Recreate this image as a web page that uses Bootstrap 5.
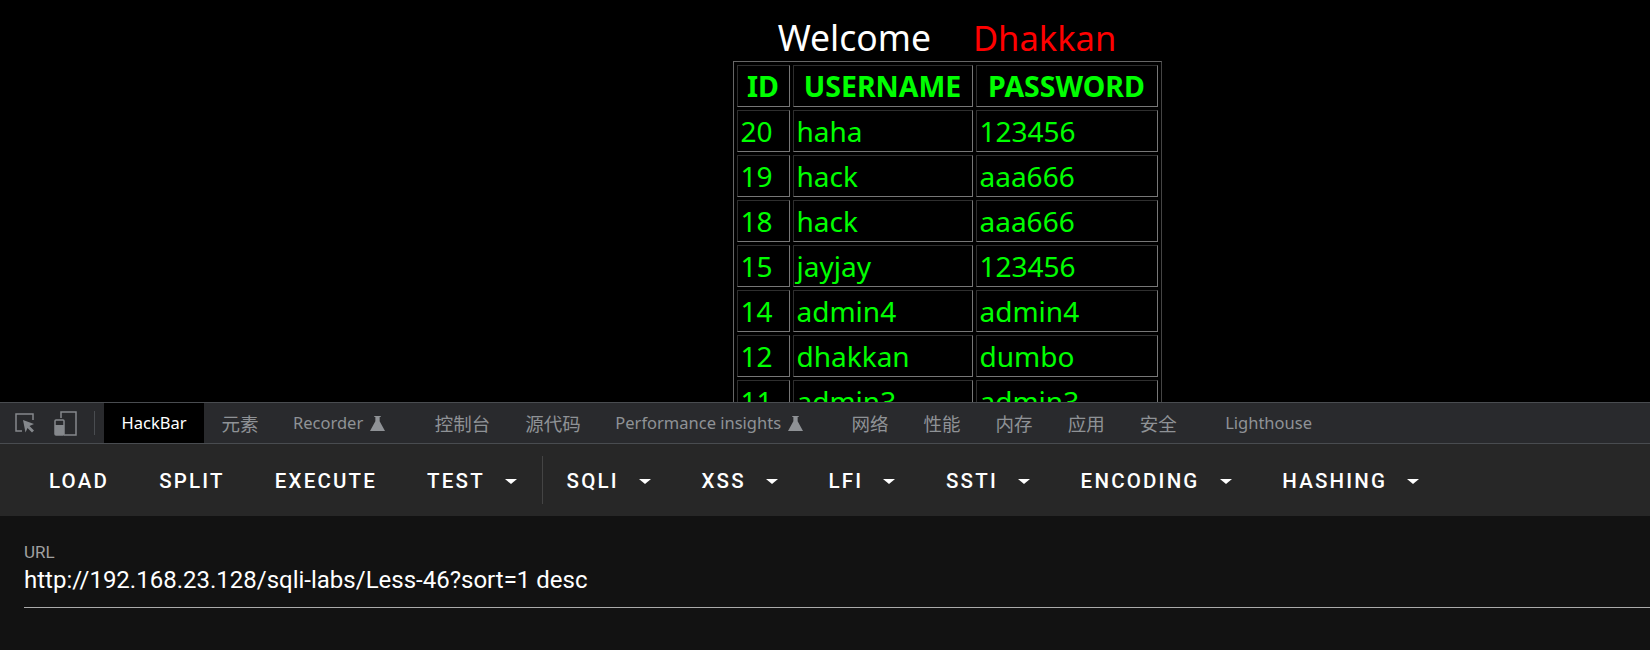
<!DOCTYPE html>
<html lang="zh">
<head>
<meta charset="utf-8">
<title>Less-46</title>
<link href="https://cdn.jsdelivr.net/npm/bootstrap@5.3.0/dist/css/bootstrap.min.css" rel="stylesheet">
<style>
html,body{height:650px;overflow:hidden;background:#000}
.shell{height:650px}
.site{height:402px;overflow:hidden;background:#000;padding-left:244px;font-family:"Noto Sans","Open Sans",sans-serif}
.welcome{color:#fff;line-height:44px;padding-top:15px;height:61px;white-space:nowrap;text-align:center;font-size:35.500px}
.welcome b{font-weight:400;color:#f00;margin-left:42px;font-size:34.5px}
.sheet{border-collapse:separate;border-spacing:3px;border:1px solid;border-color:#666 #444 #444 #666;width:429px;table-layout:fixed;margin:0 auto;color:#0f0}
.sheet td,.sheet th{height:42px;padding:0 3px;border:1px solid;border-color:#2e2e2e #777 #777 #2e2e2e;line-height:40px;font-size:28px;white-space:nowrap;overflow:hidden}
.sheet th{text-align:center;font-weight:700;font-size:28.5px}
.tabsbar{height:42px;background:#292a2d;border-top:1px solid #494c50;border-bottom:1px solid #494c50;font-family:"Noto Sans","Noto Sans CJK SC",sans-serif;font-size:16.5px;color:#8f9296}
.tool{color:#85888c;flex:none}
.tool-a{margin-left:15px}
.tool-b{margin-left:19px}
.vrule{width:1px;height:24px;background:#494c50;margin:0 9px 0 17px}
.tabitem{padding:1px 17px 0;height:40px;display:flex;align-items:center;white-space:nowrap}
.tabitem.on{background:#000;color:#fff;width:100px;justify-content:center;padding:1px 0 0}
.tabitem.zh{font-family:"Noto Sans CJK SC",sans-serif;font-size:18.5px;padding:1px 17.5px 0}
.beaker{margin-left:7px}
.gap-one{margin-left:15px}
.gap-two{margin-left:14px}
.strip{height:72px;background:#272727;padding-left:24px}
.hbtn.btn{font-family:Roboto,sans-serif;font-weight:500;font-size:20.5px;letter-spacing:2.2px;color:#fff;border:0;border-radius:0;padding:2px 25px 0;text-transform:uppercase;height:48px;--bs-btn-active-color:#fff;white-space:nowrap;display:flex;align-items:center}
.hbtn.dropdown-toggle::after{margin-left:20px;margin-right:.7px;border-top:5px solid #fff;border-left:6px solid transparent;border-right:6px solid transparent;border-bottom:0;vertical-align:0}
.stripsep{width:1px;height:48px;background:#444;margin:0 -1px}
.panel{height:134px;background:#121212;padding:27px 0 0 24px;font-family:Roboto,sans-serif}
.urlcap{font-size:17px;color:#a0a0a0;line-height:18px}
.urlval{font-size:24px;color:#fff;line-height:34px;border-bottom:1px solid #aaa;padding-top:2px;padding-bottom:10px;box-sizing:content-box;height:34px}
</style>
</head>
<body>
<div class="shell d-flex flex-column">
  <div class="site">
    <div class="welcome">Welcome<b>Dhakkan</b></div>
    <table class="sheet">
      <colgroup><col style="width:53px"><col style="width:180px"><col style="width:182px"></colgroup>
      <tr><th>ID</th><th>USERNAME</th><th>PASSWORD</th></tr>
      <tr><td>20</td><td>haha</td><td>123456</td></tr>
      <tr><td>19</td><td>hack</td><td>aaa666</td></tr>
      <tr><td>18</td><td>hack</td><td>aaa666</td></tr>
      <tr><td>15</td><td>jayjay</td><td>123456</td></tr>
      <tr><td>14</td><td>admin4</td><td>admin4</td></tr>
      <tr><td>12</td><td>dhakkan</td><td>dumbo</td></tr>
      <tr><td>11</td><td>admin3</td><td>admin3</td></tr>
    </table>
  </div>
  <div class="tabsbar d-flex align-items-center">
    <svg class="tool tool-a" width="20" height="20" viewBox="0 0 20 20" fill="none"><path d="M7 18H1V1h17v6" stroke="currentColor" stroke-width="1.5"/><path d="M8 7l11 4-4.500 2 4.500 4.500-2 2-4.500-4.500-2 4.500z" fill="currentColor"/></svg>
    <svg class="tool tool-b" width="23" height="25" viewBox="0 0 23 25" fill="none" stroke="currentColor" stroke-width="1.5"><path d="M7 7V1h15v23H10"/><rect x="1" y="9" width="9" height="15" rx="1"/><rect x="1" y="14" width="9" height="10" fill="currentColor" stroke="none"/></svg>
    <span class="vrule"></span>
    <div class="tabitem on">HackBar</div>
    <div class="tabitem zh">元素</div>
    <div class="tabitem">Recorder<svg class="beaker" width="15" height="15" viewBox="0 0 14 14" fill="currentColor"><path d="M4 0h6v1H9v4l5 9H0l5-9V1H4z"/></svg></div>
    <div class="tabitem zh gap-one">控制台</div>
    <div class="tabitem zh">源代码</div>
    <div class="tabitem">Performance insights<svg class="beaker" width="15" height="15" viewBox="0 0 14 14" fill="currentColor"><path d="M4 0h6v1H9v4l5 9H0l5-9V1H4z"/></svg></div>
    <div class="tabitem zh gap-two">网络</div>
    <div class="tabitem zh">性能</div>
    <div class="tabitem zh">内存</div>
    <div class="tabitem zh">应用</div>
    <div class="tabitem zh">安全</div>
    <div class="tabitem gap-two">Lighthouse</div>
  </div>
  <div class="strip d-flex align-items-center">
    <button class="btn hbtn">Load</button>
    <button class="btn hbtn">Split</button>
    <button class="btn hbtn">Execute</button>
    <button class="btn hbtn dropdown-toggle">Test</button>
    <span class="stripsep"></span>
    <button class="btn hbtn dropdown-toggle">SQLi</button>
    <button class="btn hbtn dropdown-toggle">XSS</button>
    <button class="btn hbtn dropdown-toggle">LFI</button>
    <button class="btn hbtn dropdown-toggle">SSTI</button>
    <button class="btn hbtn dropdown-toggle">Encoding</button>
    <button class="btn hbtn dropdown-toggle">Hashing</button>
  </div>
  <div class="panel">
    <div class="urlcap">URL</div>
    <div class="urlval">http://192.168.23.128/sqli-labs/Less-46?sort=1 desc</div>
  </div>
</div>
<script src="https://cdn.jsdelivr.net/npm/bootstrap@5.3.0/dist/js/bootstrap.bundle.min.js"></script>
</body>
</html>
